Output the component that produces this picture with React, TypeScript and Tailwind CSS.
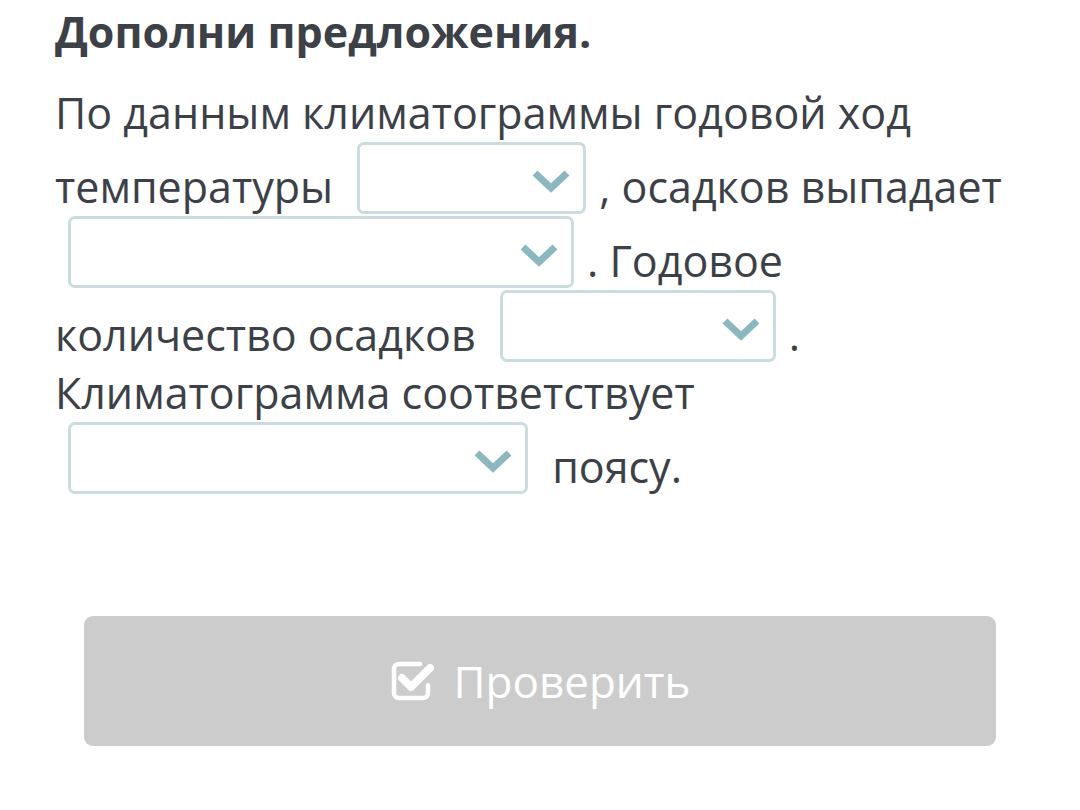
import React from 'react';

function Dropdown({ width }: { width: string }) {
  return (
    <span
      className={`relative inline-block h-[72px] align-[-11px] mx-[13px] rounded-[7px] border-[3px] border-[#cadcdd] bg-white ${width}`}
    >
      <svg
        className="absolute right-[12px] top-[24px]"
        width="40"
        height="24"
        viewBox="0 0 40 24"
        fill="none"
      >
        <path d="M4 4 L20 19 L36 4" stroke="#8bb7bf" strokeWidth="7" strokeLinejoin="miter" />
      </svg>
    </span>
  );
}

function CheckSquareIcon() {
  return (
    <svg width="46" height="42" viewBox="0 0 46 42" fill="none">
      <path
        d="M30 4 H9 a5 5 0 0 0 -5 5 v24 a5 5 0 0 0 5 5 h24 a5 5 0 0 0 5 -5 v-8"
        stroke="white"
        strokeWidth="4.5"
        strokeLinecap="round"
      />
      <path d="M12 18 L21 27 L40 8" stroke="white" strokeWidth="8" strokeLinecap="round" strokeLinejoin="round" />
    </svg>
  );
}

export default function App() {
  return (
    <div className="min-h-[810px] w-[1080px] bg-white text-[#3c4047] font-['Open_Sans',sans-serif]">
      <div className="pl-[55px] pr-[55px] pt-[4px]">
        {/* Heading */}
        <h2 className="text-[43px] font-bold leading-[56px]">Дополни предложения.</h2>

        {/* Sentence with blanks */}
        <p className="mt-[24px] text-[43px] leading-[58px]">
          По данным климатограммы годовой ход температуры <Dropdown width="w-[229px]" />, осадков выпадает{' '}
          <Dropdown width="w-[506px]" />. Годовое количество осадков <Dropdown width="w-[276px]" />.
          Климатограмма соответствует <Dropdown width="w-[460px]" /> поясу.
        </p>

        {/* Check button */}
        <div className="mt-[120px] px-[29px]">
          <button className="flex h-[130px] w-full items-center justify-center gap-[18px] rounded-[9px] bg-[#cccccc] text-[44px] text-white">
            <CheckSquareIcon />
            <span>Проверить</span>
          </button>
        </div>
      </div>
    </div>
  );
}
